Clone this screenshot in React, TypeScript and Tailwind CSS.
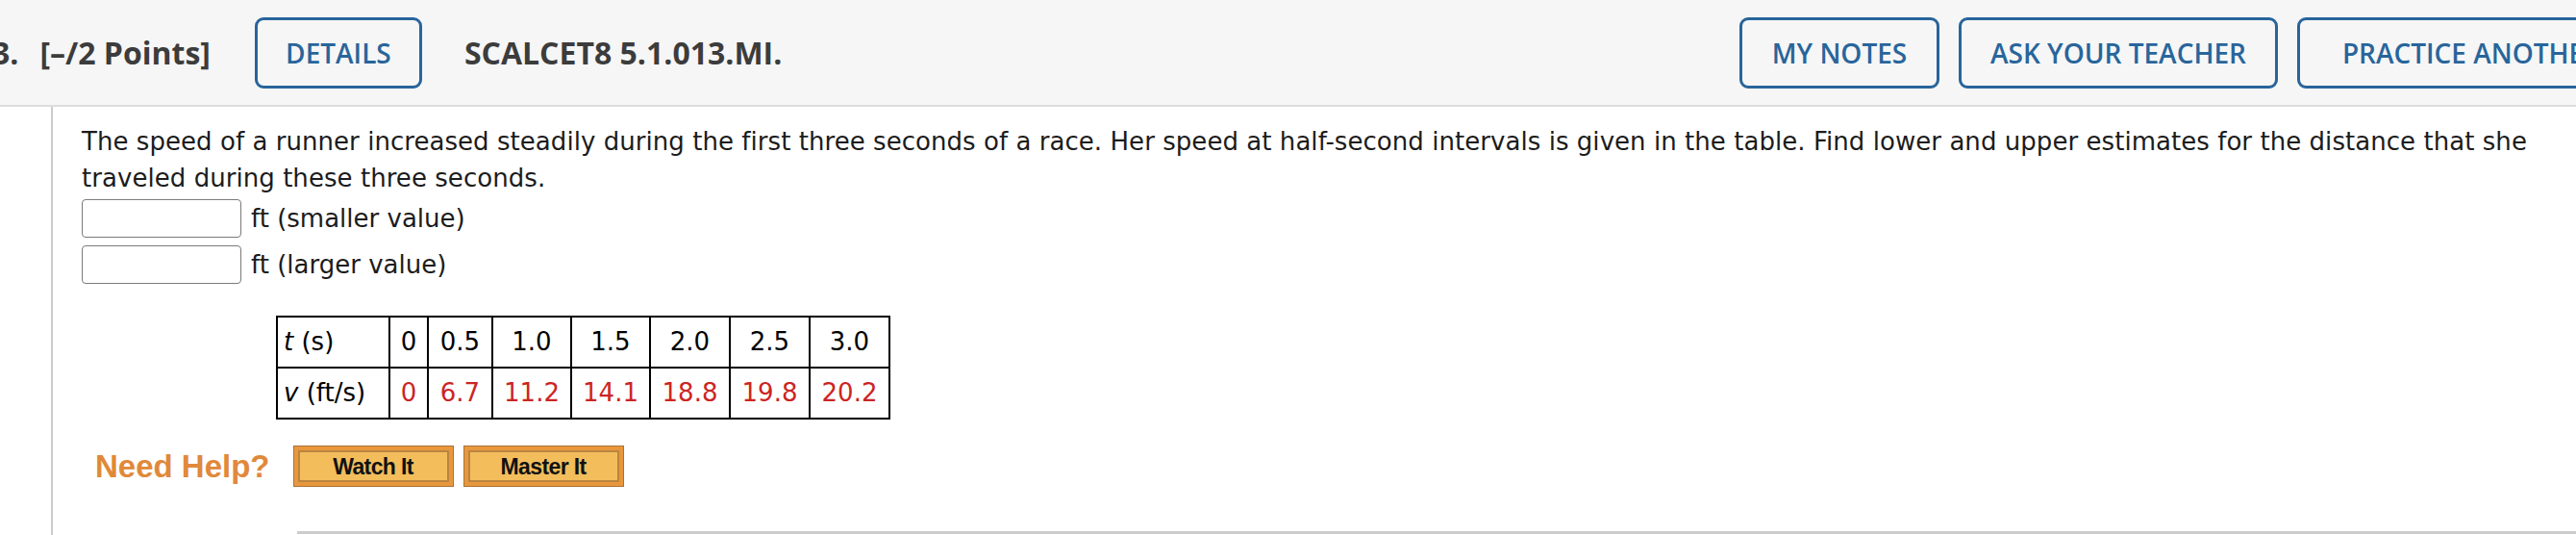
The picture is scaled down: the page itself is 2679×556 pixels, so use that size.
import React from "react";

const times = ["0", "0.5", "1.0", "1.5", "2.0", "2.5", "3.0"];
const speeds = ["0", "6.7", "11.2", "14.1", "18.8", "19.8", "20.2"];
const widths = ["w-[40px]", "w-[67px]", "w-[82px]", "w-[82px]", "w-[83px]", "w-[83px]", "w-[83px]"];

function HeadButton({ label, w }: { label: string; w: string }) {
    return (
        <button className={`${w} h-[74px] shrink-0 border-[3px] border-[#28659b] rounded-[9px] text-[#28659b] text-[28px] font-semibold font-['Open_Sans',sans-serif] flex items-center justify-center`}>
            {label}
        </button>
    );
}

function HelpButton({ label }: { label: string }) {
    return (
        <div className="w-[167px] h-[43px] bg-[#e9973c] border border-[#a8733a] p-[4px] flex">
            <div className="flex-1 bg-[#f3bd5c] border-2 border-[#b98540] flex items-center justify-center text-[23px] font-bold text-[#111] font-['Liberation_Sans',Arial,sans-serif] tracking-[-0.6px]">
                {label}
            </div>
        </div>
    );
}

export default function App() {
    return (
        <div className="w-[2679px] h-[556px] overflow-hidden bg-white flex flex-col">
            <header className="h-[111px] shrink-0 bg-[#f6f6f6] border-b-2 border-[#dddddd] flex items-center overflow-hidden">
                <div className="min-w-[2775px] flex items-center font-['Open_Sans',sans-serif] text-[#3c3c3c]">
                    <span className="ml-[-8px] text-[32px] font-bold">3.</span>
                    <span className="ml-[22px] text-[32px] font-bold">[–/2 Points]</span>
                    <div className="ml-[46px]"><HeadButton label="DETAILS" w="w-[174px]" /></div>
                    <span className="ml-[44px] text-[32px] font-bold">SCALCET8 5.1.013.MI.</span>
                    <div className="ml-auto mr-[23px] flex gap-[20px]">
                        <HeadButton label="MY NOTES" w="w-[208px]" />
                        <HeadButton label="ASK YOUR TEACHER" w="w-[332px]" />
                        <HeadButton label="PRACTICE ANOTHER" w="w-[363px]" />
                    </div>
                </div>
            </header>

            <div className="flex-1 ml-[53px] border-l-2 border-[#cccccc] pl-[30px] pt-[17px] flex flex-col font-['DejaVu_Sans',Verdana,sans-serif] text-[26px] text-[#1c1c1c]">
                <p className="leading-[38px] whitespace-nowrap tracking-[0.05px]">
                    The speed of a runner increased steadily during the first three seconds of a race. Her speed at half-second intervals is given in the table. Find lower and upper estimates for the distance that she
                    <br />
                    traveled during these three seconds.
                </p>
                <div className="mt-[3px] flex items-center gap-[10px]">
                    <input className="w-[166px] h-[40px] border-[1.5px] border-[#7a7a7a] rounded-[4px] bg-white" />
                    <span>ft (smaller value)</span>
                </div>
                <div className="mt-[8px] flex items-center gap-[10px]">
                    <input className="w-[166px] h-[40px] border-[1.5px] border-[#7a7a7a] rounded-[4px] bg-white" />
                    <span>ft (larger value)</span>
                </div>

                <table className="ml-[202px] mt-[33px] border-collapse border-2 border-black table-fixed w-[637px]">
                    <colgroup>
                        <col className="w-[117px]" />
                        {widths.map((w, i) => <col key={i} className={w} />)}
                    </colgroup>
                    <tbody>
                        <tr className="h-[53px]">
                            <td className="border-2 border-black pl-[6px] text-black whitespace-nowrap"><i>t</i> (s)</td>
                            {times.map((t) => <td key={t} className="border-2 border-black text-center text-black">{t}</td>)}
                        </tr>
                        <tr className="h-[53px]">
                            <td className="border-2 border-black pl-[6px] text-black whitespace-nowrap"><i>v</i> (ft/s)</td>
                            {speeds.map((s) => <td key={s} className="border-2 border-black text-center text-[#cc2424]">{s}</td>)}
                        </tr>
                    </tbody>
                </table>

                <div className="mt-[24px] ml-[14px] flex items-center">
                    <span className="text-[33px] font-bold text-[#e0893a] font-['Liberation_Sans',Arial,sans-serif]">Need Help?</span>
                    <div className="ml-[24px] flex gap-[10px]">
                        <HelpButton label="Watch It" />
                        <HelpButton label="Master It" />
                    </div>
                </div>

                <div className="mt-auto mb-[1px] ml-[224px] h-[3px] bg-[#cccccc]" />
            </div>
        </div>
    );
}
